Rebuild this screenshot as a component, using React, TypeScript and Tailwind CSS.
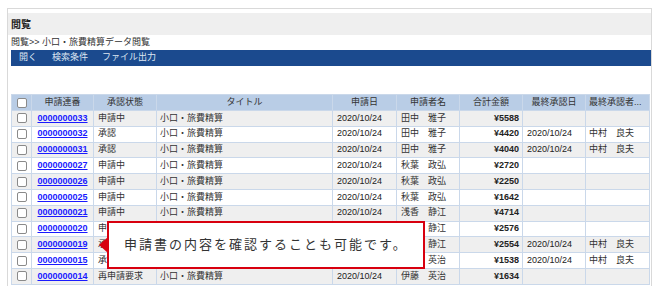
import React from "react";

type Row = {
  id: string;
  status: string;
  name: string;
  amount: string;
  adate: string;
  approver: string;
};

const rows: Row[] = [
  { id: "0000000033", status: "申請中", name: "田中　雅子", amount: "¥5588", adate: "", approver: "" },
  { id: "0000000032", status: "承認", name: "田中　雅子", amount: "¥4420", adate: "2020/10/24", approver: "中村　良夫" },
  { id: "0000000031", status: "承認", name: "田中　雅子", amount: "¥4040", adate: "2020/10/24", approver: "中村　良夫" },
  { id: "0000000027", status: "申請中", name: "秋葉　政弘", amount: "¥2720", adate: "", approver: "" },
  { id: "0000000026", status: "申請中", name: "秋葉　政弘", amount: "¥2250", adate: "", approver: "" },
  { id: "0000000025", status: "申請中", name: "秋葉　政弘", amount: "¥1642", adate: "", approver: "" },
  { id: "0000000021", status: "申請中", name: "浅香　静江", amount: "¥4714", adate: "", approver: "" },
  { id: "0000000020", status: "申請中", name: "浅香　静江", amount: "¥2576", adate: "", approver: "" },
  { id: "0000000019", status: "承認", name: "浅香　静江", amount: "¥2554", adate: "2020/10/24", approver: "中村　良夫" },
  { id: "0000000015", status: "承認", name: "伊藤　英治", amount: "¥1538", adate: "2020/10/24", approver: "中村　良夫" },
  { id: "0000000014", status: "再申請要求", name: "伊藤　英治", amount: "¥1634", adate: "", approver: "" },
];

const Box = () => (
  <span className="inline-block w-[10px] h-[10px] rounded-[2px] border border-[#8a8a8a] bg-white align-middle" />
);

const cols = [20, 62, 63, 176, 64, 63, 63, 63, 64];

export default function App() {
  const font = { fontFamily: '"Liberation Sans", "Noto Sans CJK JP", sans-serif' };
  return (
    <div className="relative w-[658px] h-[298px] bg-white overflow-hidden text-[#333]" style={font}>
      <div className="ml-[7px] mt-[8px] w-[645px] h-[278px] border-x border-t border-[#d9d9d9] pt-[4px]">
        <div className="h-[22px] bg-[#efefef] flex items-center pl-[3px] text-[10px] font-bold text-[#222]">
          閲覧
        </div>
        <div className="h-[15px] flex items-center pl-[3px] text-[9px] text-[#333]">
          閲覧&gt;&gt; 小口・旅費精算データ閲覧
        </div>
        <div className="ml-[3px] h-[16px] bg-[#1b4a8e] flex items-center text-[9px] text-[#dde6f2]">
          <span className="ml-[8px]">開く</span>
          <span className="ml-[15px]">検索条件</span>
          <span className="ml-[14px]">ファイル出力</span>
        </div>
        <div className="h-[28px]" />
        <table className="ml-[3px] w-[639px] table-fixed border-collapse text-[9px]">
          <colgroup>
            {cols.map((w, i) => (
              <col key={i} style={{ width: w }} />
            ))}
          </colgroup>
          <thead>
            <tr className="h-[16px] bg-[#b9cde6] text-[#333]">
              <th className="border border-[#cad8ea] p-0 font-normal leading-none">
                <Box />
              </th>
              <th className="border border-[#cad8ea] p-0 font-normal">申請連番</th>
              <th className="border border-[#cad8ea] p-0 font-normal">承認状態</th>
              <th className="border border-[#cad8ea] p-0 font-normal">タイトル</th>
              <th className="border border-[#cad8ea] p-0 font-normal">申請日</th>
              <th className="border border-[#cad8ea] p-0 font-normal">申請者名</th>
              <th className="border border-[#cad8ea] p-0 font-normal">合計金額</th>
              <th className="border border-[#cad8ea] p-0 font-normal">最終承認日</th>
              <th className="border border-[#cad8ea] p-0 font-normal text-left pl-[3px] whitespace-nowrap overflow-hidden">最終承認者...</th>
            </tr>
          </thead>
          <tbody>
            {rows.map((r, i) => (
              <tr key={r.id} className={`h-[15.8px] ${i % 2 === 0 ? "bg-[#efefef]" : "bg-white"}`}>
                <td className="border border-[#cad8ea] p-0 text-center leading-none">
                  <Box />
                </td>
                <td className="border border-[#cad8ea] p-0 text-center">
                  <span className="font-bold text-[#1a1aff] underline">{r.id}</span>
                </td>
                <td className="border border-[#cad8ea] p-0 pl-[4px]">{r.status}</td>
                <td className="border border-[#cad8ea] p-0 pl-[3px]">小口・旅費精算</td>
                <td className="border border-[#cad8ea] p-0 pl-[4px] text-[#222]">2020/10/24</td>
                <td className="border border-[#cad8ea] p-0 pl-[4px] whitespace-pre">{r.name}</td>
                <td className="border border-[#cad8ea] p-0 pr-[3px] text-right text-[#222] font-semibold">{r.amount}</td>
                <td className="border border-[#cad8ea] p-0 pl-[4px] text-[#222]">{r.adate}</td>
                <td className="border border-[#cad8ea] p-0 pl-[3px] whitespace-pre">{r.approver}</td>
              </tr>
            ))}
          </tbody>
        </table>
      </div>

      <div className="absolute left-[107px] top-[221px] w-[318px] h-[48px] border-2 border-[#d8000f] bg-white flex items-center pl-[15px] text-[13px] tracking-[2px] text-[#333]">
        申請書の内容を確認することも可能です。
        <svg className="absolute left-[-10px] top-[14px]" width="9" height="16" viewBox="0 0 9 16">
          <polygon points="9,0 0,8 9,16" fill="#d8000f" />
        </svg>
      </div>
    </div>
  );
}
